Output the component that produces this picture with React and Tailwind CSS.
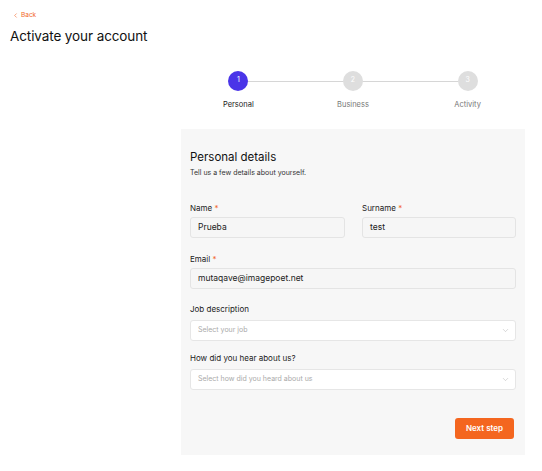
import { ChevronDown, ChevronLeft } from "lucide-react";

const steps = [
  { n: 1, label: "Personal", active: true },
  { n: 2, label: "Business" },
  { n: 3, label: "Activity" },
];

function Field({ label, required, value, className = "" }) {
  return (
    <div className={className}>
      <label className="block text-[8px] text-[#222] leading-none mb-[5px]">
        {label}
        {required && <span className="text-[#f2662a]"> *</span>}
      </label>
      <div className="h-[21px] rounded-[3px] border border-[#e4e4e4] bg-[#f6f6f6] flex items-center px-[7px] text-[8.5px] text-[#222]">
        {value}
      </div>
    </div>
  );
}

function Select({ label, placeholder }) {
  return (
    <div>
      <label className="block text-[8px] text-[#222] leading-none mb-[7px]">{label}</label>
      <div className="h-[21px] rounded-[3px] border border-[#e6e6e6] bg-white flex items-center justify-between pl-[7px] pr-[5px] text-[7px] text-[#aaa]">
        {placeholder}
        <ChevronDown size={9} strokeWidth={1.2} className="text-[#aaa]" />
      </div>
    </div>
  );
}

export default function App() {
  return (
    <div className="min-h-[471px] bg-white font-['Inter',sans-serif] text-[#1a1a1a]">
      <div className="pl-[12px] pt-[12px]">
        <a className="flex items-center gap-[2px] text-[6.5px] text-[#f2662a] leading-none">
          <ChevronLeft size={7} strokeWidth={2} />
          Back
        </a>
        <h1 className="mt-[11px] -ml-[2px] text-[13.5px] leading-none text-[#111] tracking-[-0.1px]">
          Activate your account
        </h1>
      </div>

      <div className="flex pl-[181px] pt-[27px]">
        <div className="w-[344px]">
          <div className="grid grid-cols-3">
            {steps.map((s, i) => (
              <div key={s.n} className="flex flex-col items-center relative">
                {i > 0 && (
                  <div className="absolute top-[10px] right-1/2 w-full h-px bg-[#d6d6d6]" />
                )}
                <div
                  className={
                    "relative z-10 w-[20px] h-[20px] rounded-full flex items-center justify-center text-[7px] text-white " +
                    (s.active ? "bg-[#4a35e8]" : "bg-[#dedede]")
                  }
                >
                  {s.n}
                </div>
                <div
                  className={
                    "mt-[10px] text-[7.5px] leading-none " +
                    (s.active ? "text-[#222]" : "text-[#777]")
                  }
                >
                  {s.label}
                </div>
              </div>
            ))}
          </div>

          <div className="mt-[21px] bg-[#f7f7f7] h-[326px] px-[9px] pt-[23px]">
            <h2 className="text-[11.5px] leading-none text-[#111]">Personal details</h2>
            <p className="mt-[5px] text-[7px] leading-none text-[#333]">
              Tell us a few details about yourself.
            </p>

            <div className="mt-[28px] flex gap-[17px]">
              <Field label="Name" required value="Prueba" className="w-[155px]" />
              <Field label="Surname" required value="test" className="flex-1" />
            </div>

            <div className="mt-[17px]">
              <Field label="Email" required value="mutaqave@imagepoet.net" />
            </div>

            <div className="mt-[16px]">
              <Select label="Job description" placeholder="Select your job" />
            </div>

            <div className="mt-[13px]">
              <Select label="How did you hear about us?" placeholder="Select how did you heard about us" />
            </div>

            <div className="mt-[28px] flex justify-end">
              <button className="w-[59px] h-[21px] rounded-[3px] bg-[#f4661f] text-white text-[8px] font-semibold mr-[2px]">
                Next step
              </button>
            </div>
          </div>
        </div>
      </div>
    </div>
  );
}
